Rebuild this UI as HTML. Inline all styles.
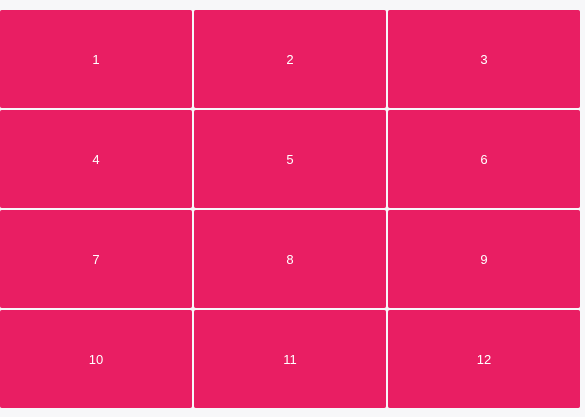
<!DOCTYPE html>
<html><head><style>
html,body{margin:0;padding:0;background:#f7f7f9;width:585px;height:417px;overflow:hidden}
.g{position:absolute;left:0;top:10px;display:grid;grid-template-columns:repeat(3,192px);grid-template-rows:repeat(4,98px);gap:2px}
.g div{background:#e91e63;border-radius:2px;color:#fff;font:13px "Liberation Sans",sans-serif;display:flex;align-items:center;justify-content:center}
</style></head><body>
<div class="g"><div>1</div><div>2</div><div>3</div><div>4</div><div>5</div><div>6</div><div>7</div><div>8</div><div>9</div><div>10</div><div>11</div><div>12</div></div>
</body></html>
